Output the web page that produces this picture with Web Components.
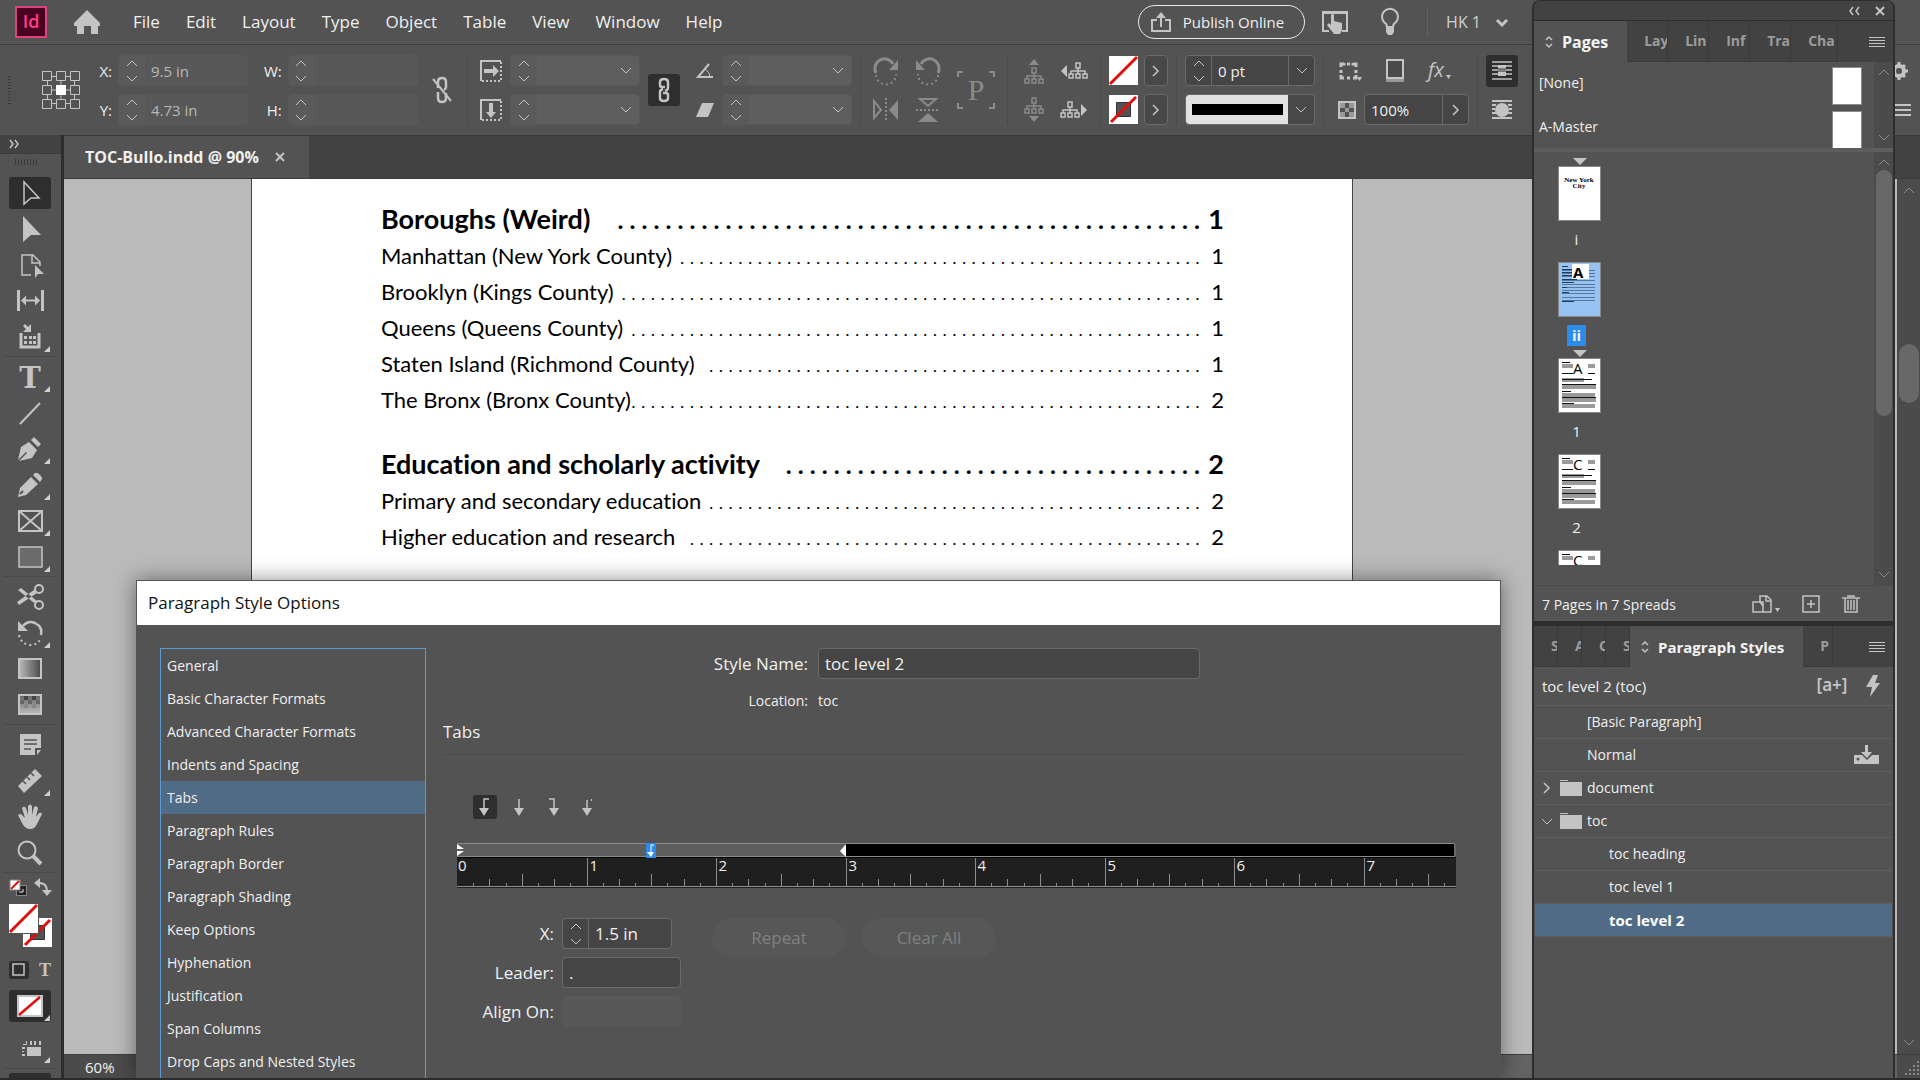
<!DOCTYPE html>
<html lang="en">
<head>
<meta charset="utf-8">
<title>TOC-Bullo.indd @ 90%</title>
<style>
  html, body { height: 100%; margin: 0; }
  body {
    display: flex;
    flex-direction: column;
    position: relative;
    overflow: hidden;
    background: #535353;
    color: #f0f0f0;
    font: 15px/20px "Open Sans", "Noto Sans", sans-serif;
    border-bottom: 2px solid #2b2b2b;
    box-sizing: border-box;
  }
  main { flex: 1; display: flex; min-height: 0; }
  id-document { flex: 1; min-width: 0; }
  /* floating windows */
  id-dialog { position: absolute; left: 136px; right: 419px; top: 580px; bottom: 0; }
  .dock { position: absolute; right: 25px; top: 0; bottom: 0; width: 363px; display: flex; flex-direction: column; }
  .dock id-styles { flex: 1; min-height: 0; }
</style>
</head>
<body>
  <id-menubar></id-menubar>
  <id-controlbar></id-controlbar>
  <main>
    <id-toolbar></id-toolbar>
    <id-document name="TOC-Bullo.indd @ 90%" zoom="60%">
      <toc-line level="1" dots="49" page="1">Boroughs (Weird)</toc-line>
      <toc-line dots="54" page="1">Manhattan (New York County)</toc-line>
      <toc-line dots="60" page="1">Brooklyn (Kings County)</toc-line>
      <toc-line dots="59" page="1">Queens (Queens County)</toc-line>
      <toc-line dots="51" page="1">Staten Island (Richmond County)</toc-line>
      <toc-line dots="59" page="2">The Bronx (Bronx County)</toc-line>
      <toc-line level="1" dots="35" page="2">Education and scholarly activity</toc-line>
      <toc-line dots="51" page="2">Primary and secondary education</toc-line>
      <toc-line dots="53" page="2">Higher education and research</toc-line>
    </id-document>
  </main>
  <id-dialog></id-dialog>
  <div class="dock">
    <id-pages></id-pages>
    <id-styles></id-styles>
  </div>

<script>
// name: [width, height, svg body]
const ICONS = {
  logo: [32, 32, '<rect x="1" y="1" width="30" height="30" fill="#49021f" stroke="#d9467f" stroke-width="2"/><text x="16" y="22" text-anchor="middle" font-size="18" font-weight="600" font-family="Open Sans" fill="#ff3f8d">Id</text>'],
  home: [28, 24, '<path d="M14 0L27 13v3h-2v8h-7v-8h-7v8H4v-8H1v-3z"/>'],
  share: [20, 20, '<path class="s" d="M6 8H1v11h18V8h-5" stroke-width="2"/><path d="M10 0l5 6h-4v9H9V6H5z"/>'],
  touch: [28, 24, '<path d="M1 1h26v21h-6v-2h4V4H3v16h5v2H1z"/><path d="M10 5q2-2 3 0v6l8 2v7l-2 4h-6l-7-9 2-2 2 2z"/>'],
  bulb: [22, 30, '<path class="s" d="M8 20q0-3-3-5a8 8 0 1 1 12 0q-3 2-3 5z" stroke-width="2"/><path d="M7 21h8v4l-2 3h-4l-2-3z"/>'],
  down: [12, 7, '<path class="s" d="M1 1l5 5 5-5"/>'],
  downb: [14, 9, '<path class="s" d="M2 2l5 5 5-5" stroke-width="3"/>'],
  up: [12, 7, '<path class="s" d="M1 6l5-5 5 5"/>'],
  right: [8, 12, '<path class="s" d="M1 1l5 5-5 5" stroke-width="1.5"/>'],
  ref: [38, 38, '<path class="s" d="M9.500 5.500h5M23.500 5.500h5M9.500 32.500h5M23.500 32.500h5M5.500 9.500v5M5.500 23.500v5M32.500 9.500v5M32.500 23.500v5M9.500 19h5M23.500 19h5M19 9.500v5M19 23.500v5M.5.500h9v9h-9zM14.500.500h9v9h-9zM28.500.500h9v9h-9zM.5 14.500h9v9h-9zM28.500 14.500h9v9h-9zM.5 28.500h9v9h-9zM14.500 28.500h9v9h-9zM28.500 28.500h9v9h-9z"/><path fill="#fff" d="M14 14h10v10H14z"/>'],
  unlink: [20, 26, '<path class="s" d="M6 11V5q0-4 4-4t4 4v5q0 2-2 3M6 15v6q0 4 4 4t4-4v-5" stroke-width="2.500"/><path class="s" d="M1 2l18 22" stroke-width="2"/>'],
  link: [14, 24, '<path class="s" d="M8 9H5q-2 0-2-2V4q0-3 4-3t4 3v6q0 2-3 3M6 15h3q2 0 2 2v3q0 3-4 3t-4-3v-6q0-2 3-3" stroke-width="2.500"/>'],
  scalex: [22, 22, '<path class="s" d="M1 21V1h20" stroke-width="2"/><path class="s" d="M21 2v19H1" stroke-width="2" stroke-dasharray="2 2"/><path d="M4 9h9V5l6 6-6 6v-4H4z"/>'],
  scaley: [22, 22, '<path class="s" d="M1 21V1h20" stroke-width="2"/><path class="s" d="M21 2v19H1" stroke-width="2" stroke-dasharray="2 2"/><path d="M9 4v9H6l5 6 5-6h-3V4z"/>'],
  angle: [18, 16, '<path class="s" d="M13 1L2 14h15" stroke-width="2"/><path class="s" d="M9 6q5 3 5 8"/>'],
  shear: [18, 16, '<path d="M6 1h12l-6 14H0z"/>'],
  rotcw: [26, 26, '<path class="s" d="M3 15A9.500 9.500 0 0 1 20 6" stroke-width="3"/><path d="M25 2v10h-9z"/><path class="s" d="M3 17a10 10 0 0 0 20-1" stroke-width="2" stroke-dasharray="2 3"/>'],
  rotccw: [26, 26, '<path class="s" d="M23 15A9.500 9.500 0 0 0 6 6" stroke-width="3"/><path d="M1 2v10h9z"/><path class="s" d="M23 17a10 10 0 0 1-20-1" stroke-width="2" stroke-dasharray="2 3"/>'],
  fliph: [26, 24, '<path class="s" d="M1 3v17l7-8z" stroke-width="2"/><path class="s" d="M13 0v24" stroke-width="2" stroke-dasharray="2 2"/><path d="M25 2v20l-9-10z"/>'],
  flipv: [24, 26, '<path class="s" d="M4 2h16l-8 7z" stroke-width="2"/><path class="s" d="M0 13h24" stroke-width="2" stroke-dasharray="2 2"/><path d="M2 25h20L12 16z"/>'],
  pbox: [38, 38, '<path class="s" d="M1 6V1h5M32 1h5v5M37 32v5h-5M6 37H1v-5" stroke-width="2"/><text x="19" y="29" text-anchor="middle" font-size="30" font-family="Liberation Serif">P</text>'],
  treeup: [20, 26, '<path d="M5 7h10l-5-6z"/><path class="s" d="M8 10h4v5H8zM10 15v6M3 21v-3h14v3M1 21h4v4H1zM8 21h4v4H8zM15 21h4v4h-4z" stroke-width="1.500"/>'],
  treedown: [20, 26, '<path d="M5 19h10l-5 6z"/><path class="s" d="M8 1h4v5H8zM10 6v6M3 12V9h14v3M1 12h4v4H1zM8 12h4v4H8zM15 12h4v4h-4z" stroke-width="1.500"/>'],
  treeprev: [28, 18, '<path d="M7 3v12L1 9z"/><path class="s" d="M16 1h4v5h-4zM18 6v6M11 12V9h14v3M9 12h4v4H9zM16 12h4v4h-4zM23 12h4v4h-4z" stroke-width="1.500"/>'],
  treenext: [28, 18, '<path d="M21 3v12l6-6z"/><path class="s" d="M8 1h4v5H8zM10 6v6M3 12V9h14v3M1 12h4v4H1zM8 12h4v4H8zM15 12h4v4h-4z" stroke-width="1.500"/>'],
  none: [29, 29, '<path fill="#fff" d="M0 0h29v29H0z"/><path d="M1 28L28 1" stroke="#e01010" stroke-width="3"/>'],
  nonestroke: [29, 29, '<path fill="#fff" d="M0 0h29v29H0z"/><path fill="#535353" stroke="#333" d="M7.500 7.500h14v14h-14z"/><path d="M2 27L27 2" stroke="#e01010" stroke-width="3"/>'],
  corner: [24, 20, '<path class="s" d="M3 6V3h3v-1M9 3h3M15 2v1h3v3M18 9v3M18 14v3h-3M12 17H9M6 17H3v-3M3 12V9" stroke-width="3"/><path d="M19 16h5l-2.500 4z"/>'],
  shadow: [22, 24, '<path fill="#999" d="M2 17h18v6H2z"/><path d="M3 1h16v18H3z" fill="#4a4a4a" stroke="#c4c4c4" stroke-width="2"/>'],
  fx: [26, 24, '<text x="0" y="18" font-size="20" font-style="italic" font-family="Open Sans">fx</text><path d="M18 16h5l-2.500 4z"/>'],
  checker: [18, 18, '<path class="s" d="M1 1h16v16H1z" stroke-width="2"/><path fill="#999" d="M2 2h5v5H2zM11 2h5v5h-5zM2 11h5v5H2zM11 11h5v5h-5zM7 7h4v4H7z"/>'],
  wrapnone: [22, 20, '<path class="s" d="M1 1h20M1 5h20M1 9h20M1 13h20M1 18h20" stroke-width="1.500"/><path d="M7 4h8v3H7zM7 11h8v4H7z"/><path fill="#777" d="M7 7h8v4H7z"/>'],
  wraparound: [22, 20, '<path class="s" d="M1 1h20M1 5h4M17 5h4M1 9h3M18 9h3M1 13h4M17 13h4M1 18h20" stroke-width="2"/><ellipse cx="11" cy="10" rx="7" ry="7"/>'],
  gear: [22, 22, '<circle class="s" cx="11" cy="11" r="5" stroke-width="4"/><path class="s" d="M11 2v18M2 11h18M5 5l3 3M14 14l3 3M17 5l-3 3M8 14l-3 3" stroke-width="3"/><circle cx="11" cy="11" r="3" fill="#535353"/>'],
  lines: [24, 12, '<path class="s" d="M0 1h24M0 6h24M0 11h24" stroke-width="2"/>'],
  menu: [16, 12, '<path class="s" d="M0 1.500h16M0 4.500h16M0 7.500h16M0 10.500h16"/>'],
  expand: [10, 8, '<path class="s" d="M1 0l3 4-3 4M6 0l3 4-3 4" stroke-width="1.500"/>'],
  collapse: [12, 8, '<path class="s" d="M5 0L2 4l3 4M11 0L8 4l3 4" stroke-width="1.500"/>'],
  close: [10, 10, '<path class="s" d="M1 1l8 8M9 1L1 9" stroke-width="2"/>'],
  updown: [8, 14, '<path class="s" d="M1 5l3-3 3 3M1 9l3 3 3-3" stroke-width="1.500"/>'],
  tri: [14, 7, '<path d="M0 0h14L7 7z"/>'],
  // tools, drawn round the middle of a 30px box
  select: [30, 30, '<path class="s" d="M9 4v22l7-6h8z" stroke-width="1.500"/>'],
  direct: [30, 30, '<path d="M8 2v26l8-7h10z"/>'],
  page: [30, 30, '<path class="s" d="M16 25H7V5h11l7 7v4M17 5v8h8" stroke-width="1.500"/><path d="M20 15v13l3-4h6z"/>'],
  gap: [30, 30, '<path d="M2 4h3v21H2zM26 4h3v21h-3zM6 14.500l5-5v4h9v-4l5 5-5 5v-4h-9v4z"/>'],
  collect: [30, 30, '<path class="s" d="M6 11v14h18V11" stroke-width="3"/><path d="M9 14h3v3H9zM14 14h3v3h-3zM18 14h3v3h-3zM9 19h3v3H9zM14 19h3v3h-3zM18 19h3v3h-3zM16 2v8H8l3-3-3-3 2-2 3 3z"/>'],
  type: [30, 30, '<text x="15" y="26" text-anchor="middle" font-size="29" font-weight="bold" font-family="DejaVu Serif">T</text>'],
  line: [30, 30, '<path class="s" d="M5 26L25 5" stroke-width="2"/>'],
  pen: [30, 30, '<path d="M3 26l3-13 8-5 8 8-5 8-13 3 8-8-1-1zM16 6l3-3 7 7-3 3z"/>'],
  pencil: [30, 30, '<path d="M3 27l2-9L16 7l7 7-12 11zM18 5l2-2q2-1 5 2t2 4l-2 3z"/><path d="M5 24l3-3" stroke="#535353" stroke-width="2"/>'],
  frame: [30, 30, '<path class="s" d="M4 5h23v20H4zM4 5l23 20M27 5L4 25" stroke-width="2"/>'],
  rect: [30, 30, '<path fill="#6b6b6b" stroke="#c4c4c4" stroke-width="1.500" d="M4 5h23v20H4z"/>'],
  scissors: [30, 30, '<path d="M3 8l3-2 16 13-3 2zM2 20l2 3 18-12-3-3z"/><circle class="s" cx="24" cy="7" r="4" stroke-width="2"/><circle class="s" cx="24" cy="23" r="4" stroke-width="2"/>'],
  rotate: [30, 30, '<path class="s" d="M8 8q5-6 12-3 8 4 6 12" stroke-width="2.500"/><path d="M3 3v10h10z"/><path class="s" d="M4 17q2 9 11 10 8 0 11-7" stroke-width="2" stroke-dasharray="2 3"/>'],
  gradient: [30, 30, '<linearGradient id="g"><stop stop-color="#bbb"/><stop offset="1" stop-color="#484848"/></linearGradient><path fill="url(#g)" stroke="#c4c4c4" stroke-width="2" d="M4 5h22v19H4z"/>'],
  feather: [30, 30, '<linearGradient id="f" x2="0" y2="1"><stop stop-color="#666"/><stop offset="1" stop-color="#bbb"/></linearGradient><path fill="url(#f)" stroke="#c4c4c4" stroke-width="2" d="M4 5h22v19H4z"/><path fill="#444" d="M9 6h4v4H9zM17 6h4v4h-4z"/><path fill="#666" d="M5 10h4v4H5zM13 10h4v4h-4zM21 10h4v4h-4z"/><path fill="#888" d="M9 14h4v4H9zM17 14h4v4h-4z"/>'],
  note: [30, 30, '<path d="M5 4h21v14h-6v7H5zM22 20h4l-4 5z"/><path d="M9 10h13M9 14h13M9 19h7" stroke="#535353" stroke-width="1.500"/>'],
  ruler: [30, 30, '<path d="M3 20L20 3l7 7L9 27z"/><path d="M8 15l3 3M12 11l3 3M16 7l3 3" stroke="#535353" stroke-width="1.500"/>'],
  hand: [30, 30, '<path d="M3 13q2-2 4 0l3 3-3-10q2-3 4 0l2 7V4q2-3 4 0v9l2-8q3-2 4 1l-2 9 3-4q3-1 3 1l-5 10q-2 5-7 5t-8-6z"/>'],
  zoom: [30, 30, '<circle class="s" cx="12" cy="12" r="8.500" stroke-width="2"/><path class="s" d="M18 18l8 8" stroke-width="4"/>'],
  defaults: [18, 17, '<path fill="#222" stroke="#888" d="M7.500 6.500h10v10h-10z"/><path fill="#fff" stroke="#888" d="M1 1h10v10H1z"/><path d="M2 10L10 2" stroke="#e01010" stroke-width="2"/><path d="M14 10v3h-4" stroke="#eee" fill="none"/>'],
  swap: [18, 18, '<path class="s" d="M4 5q9-1 9 9" stroke-width="2"/><path d="M0 5l6-5v10zM8 12h10l-5 6z"/>'],
  box: [14, 14, '<path class="s" d="M1 1h11v11H1z" stroke-width="1.500"/>'],
  typesm: [14, 14, '<text x="7" y="13" text-anchor="middle" font-size="18" font-weight="bold" font-family="Liberation Serif">T</text>'],
  apply: [26, 22, '<path fill="#fff" stroke="#c4c4c4" stroke-width="2" d="M1 1h24v20H1z"/><path d="M2 20L23 2" stroke="#e01010" stroke-width="2.500"/>'],
  preview: [30, 30, '<path d="M12 14h14v9H12zM7 14h3v2H7zM7 21h3v2H7zM7 18h2v1H7zM11 8h1v4h-4v-1h3zM15 8h2v4h-2zM19 8h2v4h-2zM24 8h2v4h-2z"/>'],
  tableft: [12, 18, '<path class="s" d="M10 1H5v11" stroke-width="1.500"/><path d="M0 10h10l-5 8z"/>'],
  tabcenter: [12, 18, '<path class="s" d="M6 1v11" stroke-width="1.500"/><path d="M1 10h10l-5 8z"/>'],
  tabright: [12, 18, '<path class="s" d="M2 1h5v11" stroke-width="1.500"/><path d="M2 10h10l-5 8z"/>'],
  tabdecimal: [12, 18, '<path class="s" d="M6 2v11" stroke-width="1.500"/><path d="M1 10h10l-5 8zM10 1h1v2h-1z"/>'],
  pagesize: [28, 18, '<path class="s" d="M1 7h10v10H1zM8 7V1h7l4 4v12h-8M14 1v5h5M8 7l3 4" stroke-width="1.500"/><path d="M23 13h5l-2.500 4z"/>'],
  add: [18, 18, '<path class="s" d="M1 1h16v16H1zM5 9h8M9 5v8" stroke-width="1.500"/>'],
  trash: [18, 18, '<path class="s" d="M0 3h18M6 2V1h6v1M3 4v13h12V4M6 5v10M9 5v10M12 5v10" stroke-width="1.500"/>'],
  override: [28, 22, '<text x="14" y="16" text-anchor="middle" font-size="17" font-weight="600" font-family="Noto Sans">[a+]</text>'],
  bolt: [14, 22, '<path d="M7 0h5L9 8h5L4 22l2-10H0z"/>'],
  folder: [22, 18, '<path d="M0 1h8v1H0zM0 3h22v14H0z"/>'],
  download: [26, 20, '<path d="M0 10h8l5 5 5-5h7v9H0z"/><path d="M11 0h3v7h4l-5 6-6-6h4z"/><circle cx="4" cy="14" r="1.500" fill="#535353"/>'],
  grip: [14, 14, '<path d="M12 0h2v2h-2zM8 4h2v2H8zM12 4h2v2h-2zM4 8h2v2H4zM8 8h2v2H8zM12 8h2v2h-2zM0 12h2v2H0zM4 12h2v2H4zM8 12h2v2H8zM12 12h2v2h-2z"/>']
};

class IdIcon extends HTMLElement {
  connectedCallback() {
    const [w, h, body] = ICONS[this.getAttribute('name')];
    this.attachShadow({ mode: 'open' }).innerHTML = `
      <style>
        :host { display: inline-flex; flex: none; color: #c4c4c4; }
        :host([dim]) { color: #8b8b8b; }
        svg { display: block; fill: currentColor; overflow: visible; }
        .s { fill: none; stroke: currentColor; }
      </style>
      <svg width="${w}" height="${h}" viewBox="0 0 ${w} ${h}" aria-hidden="true">${body}</svg>`;
  }
}

// labelled text field, with optional stepper and drop arrow
class IdField extends HTMLElement {
  connectedCallback() {
    const has = n => this.hasAttribute(n);
    const off = has('off') ? 'disabled' : '';
    const label = this.getAttribute('label');
    this.attachShadow({ mode: 'open' }).innerHTML = `
      <style>
        :host { display: flex; align-items: center; gap: var(--gap, 6px); }
        label { flex: 1; text-align: right; white-space: nowrap; }
        .box { display: flex; box-sizing: border-box; width: var(--w, 130px); height: 31px; border: 1px solid #6a6a6a; border-radius: 4px; background: #454545; overflow: hidden; }
        button { display: flex; flex-direction: column; align-items: center; justify-content: center; gap: 8px; width: 26px; flex: none; border: 0; padding: 0; background: none; }
        .step { border-right: 1px solid #6a6a6a; }
        .drop { border-left: 1px solid #6a6a6a; }
        input { flex: 1; min-width: 0; border: 0; outline: 0; padding: 0 6px; background: none; color: #f0f0f0; font: inherit; }
        :host([off]) .box { border-color: #585858; background: #585858; }
        :host([off]) .step { border-color: #5b5b5b; background: #5a5a5a; }
        :host([off]) .drop { border: 0; }
        :host([off]) input { color: #b8b8b8; }
        :host([mid]) .box { background: #5e5e5e; }
      </style>
      ${has('nolabel') ? '' : `<label for="f">${label}</label>`}
      <div class="box">
        ${has('step') ? `<button class="step" aria-label="Step" ${off}><id-icon name="up"></id-icon><id-icon name="down"></id-icon></button>` : ''}
        <input id="f" value="${this.getAttribute('value') || ''}" aria-label="${label}" ${off}>
        ${has('drop') ? `<button class="drop" aria-label="Open list" ${off}><id-icon name="${this.getAttribute('drop') || 'down'}"></id-icon></button>` : ''}
      </div>`;
  }
}

class IdMenubar extends HTMLElement {
  connectedCallback() {
    const items = ['File', 'Edit', 'Layout', 'Type', 'Object', 'Table', 'View', 'Window', 'Help'];
    this.attachShadow({ mode: 'open' }).innerHTML = `
      <style>
        :host { display: flex; align-items: center; height: 44px; flex: none; padding: 0 411px 0 15px; border-bottom: 1px solid #3e3e3e; }
        button { border: 0; padding: 0; background: none; color: inherit; font: 17px/22px "Open Sans", sans-serif; display: flex; align-items: center; }
        .home { margin: 0 32px 0 26px; }
        nav { display: flex; gap: 26px; flex: 1; }
        .publish { gap: 12px; height: 34px; padding: 0 20px 0 12px; border: 1px solid #e8e8e8; border-radius: 17px; margin-right: 16px; font-size: 15px; }
        .bulb { margin: 0 26px 0 30px; }
        .user { gap: 14px; border-left: 1px solid #626262; height: 30px; padding-left: 18px; color: #d0d0d0; font-size: 16px; }
      </style>
      <id-icon name="logo"></id-icon>
      <button class="home" aria-label="Home"><id-icon name="home"></id-icon></button>
      <nav>${items.map(i => `<button>${i}</button>`).join('')}</nav>
      <button class="publish"><id-icon name="share"></id-icon>Publish Online</button>
      <button aria-label="Touch"><id-icon name="touch"></id-icon></button>
      <button class="bulb" aria-label="Learn"><id-icon name="bulb"></id-icon></button>
      <button class="user">HK 1 <id-icon name="downb"></id-icon></button>`;
  }
}

class IdControlbar extends HTMLElement {
  connectedCallback() {
    const icon = (n, dim) => `<button aria-label="${n}"><id-icon name="${n}" ${dim ? 'dim' : ''}></id-icon></button>`;
    this.attachShadow({ mode: 'open' }).innerHTML = `
      <style>
        :host { display: flex; align-items: center; height: 90px; flex: none; overflow: hidden; }
        section { display: flex; align-items: center; gap: 8px; height: 70px; box-sizing: border-box; padding: 0 8px; border-left: 1px solid #4a4a4a; flex: none; }
        section:first-of-type { border: 0; gap: 16px; padding: 0 15px 0 0; }
        .col { display: grid; grid-auto-rows: 31px; gap: 8px; align-items: center; justify-items: center; }
        .two { grid-template-columns: auto auto; column-gap: 16px; }
        .fields { width: 152px; justify-items: stretch; }
        .handle { width: 3px; height: 28px; margin: 0 15px 0 8px; background: repeating-linear-gradient(#3a3a3a 0 1px, transparent 1px 3px); }
        button { display: flex; align-items: center; justify-content: center; border: 0; padding: 0; background: none; }
        .on { width: 32px; height: 32px; border-radius: 3px; background: #2e2e2e; }
        .arrow { width: 24px; height: 31px; box-sizing: border-box; border: 1px solid #6a6a6a; border-radius: 4px; background: #484848; }
        .swatches { column-gap: 6px; }
        .looks { justify-items: start; }
        .effects { display: flex; gap: 22px; align-items: center; }
        .opacity { display: flex; gap: 8px; align-items: center; --w: 105px; }
        .line { display: flex; width: 130px; height: 31px; box-sizing: border-box; border: 1px solid #6a6a6a; border-radius: 4px; overflow: hidden; background: #484848; }
        select { appearance: none; flex: 1; min-width: 0; border: 6px solid #e2e2e2; border-width: 9px 5px 9px 6px; background: #000; border-radius: 0; }
        .line button { width: 26px; }
        .end { margin-left: auto; padding-right: 9px; }
      </style>
      <section>
        <div class="handle"></div>
        <id-icon name="ref"></id-icon>
        <div class="col fields"><id-field off step label="X:" value="9.5 in"></id-field><id-field off step label="Y:" value="4.73 in"></id-field></div>
        <div class="col fields"><id-field off step label="W:"></id-field><id-field off step label="H:"></id-field></div>
        ${icon('unlink')}
      </section>
      <section style="padding-left: 12px">
        <div class="col"><id-icon name="scalex"></id-icon><id-icon name="scaley"></id-icon></div>
        <div class="col"><id-field nolabel off mid step drop label="Scale X"></id-field><id-field nolabel off mid step drop label="Scale Y"></id-field></div>
        <button class="on" aria-label="Constrain proportions"><id-icon name="link"></id-icon></button>
        <div class="col" style="padding-left: 8px"><id-icon name="angle"></id-icon><id-icon name="shear"></id-icon></div>
        <div class="col"><id-field nolabel off mid step drop label="Rotation"></id-field><id-field nolabel off mid step drop label="Shear"></id-field></div>
      </section>
      <section style="padding: 0 12px; gap: 16px">
        <div class="col two">${icon('rotcw', 1)}${icon('rotccw', 1)}${icon('fliph', 1)}${icon('flipv', 1)}</div>
        <id-icon name="pbox" dim></id-icon>
      </section>
      <section style="padding: 0 12px 0 16px">
        <div class="col two">${icon('treeup', 1)}${icon('treeprev')}${icon('treedown', 1)}${icon('treenext')}</div>
      </section>
      <section>
        <div class="col two swatches">
          ${icon('none')}<button class="arrow" aria-label="Fill"><id-icon name="right"></id-icon></button>
          ${icon('nonestroke')}<button class="arrow" aria-label="Stroke"><id-icon name="right"></id-icon></button>
        </div>
      </section>
      <section>
        <div class="col">
          <id-field nolabel step drop label="Stroke weight" value="0 pt"></id-field>
          <div class="line"><select aria-label="Stroke type"><option></option></select><button aria-label="Stroke types"><id-icon name="down"></id-icon></button></div>
        </div>
      </section>
      <section style="padding: 0 8px 0 14px">
        <div class="col looks">
          <div class="effects">${icon('corner')}${icon('shadow')}${icon('fx')}</div>
          <div class="opacity">${icon('checker')}<id-field nolabel drop="right" label="Opacity" value="100%"></id-field></div>
        </div>
      </section>
      <section>
        <div class="col"><button class="on" aria-label="No text wrap"><id-icon name="wrapnone"></id-icon></button>${icon('wraparound')}</div>
      </section>
      <div class="col end">${icon('gear')}${icon('lines')}</div>`;
  }
}

class IdToolbar extends HTMLElement {
  connectedCallback() {
    const groups = [
      ['select', 'direct', 'page', 'gap', 'collect+'],
      ['type+', 'line', 'pen+', 'pencil+', 'frame+', 'rect+'],
      ['scissors', 'rotate+', 'gradient', 'feather'],
      ['note', 'ruler+', 'hand', 'zoom']
    ];
    const tool = t => {
      const name = t.replace('+', '');
      return `<button class="tool ${t !== name ? 'more' : ''} ${name === 'select' ? 'on' : ''}" aria-label="${name}"><id-icon name="${name}"></id-icon></button>`;
    };
    this.attachShadow({ mode: 'open' }).innerHTML = `
      <style>
        :host { display: block; width: 64px; flex: none; box-sizing: border-box; border-right: 3px solid #2d2d2d; overflow: hidden; }
        header { height: 18px; background: #424242; border-bottom: 1px solid #3a3a3a; display: flex; align-items: center; padding-left: 9px; }
        .handle { width: 22px; height: 6px; margin: 5px 0 12px 15px; background: repeating-linear-gradient(90deg, #3a3a3a 0 1px, transparent 1px 3px); }
        .group { display: flex; flex-direction: column; gap: 4px; padding-bottom: 3px; margin: 0 5px 4px 3px; border-bottom: 1px solid #4a4a4a; align-items: center; }
        button { position: relative; border: 0; padding: 0; background: none; display: flex; align-items: center; justify-content: center; }
        .tool { width: 42px; height: 32px; border-radius: 3px; }
        .on { background: #2e2e2e; border-radius: 3px; }
        .more::after { content: ""; position: absolute; right: 1px; bottom: 1px; border: 3px solid transparent; border-right-color: #d0d0d0; border-bottom-color: #d0d0d0; }
        .pair { display: flex; justify-content: space-between; align-items: center; padding: 0 9px 0 9px; height: 20px; }
        .swatches { position: relative; width: 44px; height: 44px; margin: 7px 0 12px 9px; }
        .swatches id-icon { position: absolute; left: 0; top: 0; outline: 1px solid #535353; }
        .swatches id-icon:first-child { left: 14px; top: 14px; }
        .small { width: 20px; height: 18px; }
        .last { margin: 10px 5px 4px 3px; border-bottom: 1px solid #4a4a4a; display: flex; flex-direction: column; align-items: center; gap: 10px; padding-bottom: 4px; }
        .cut { width: 42px; height: 32px; margin-left: 9px; }
      </style>
      <header><id-icon name="expand"></id-icon></header>
      <div class="handle"></div>
      ${groups.map(g => `<div class="group">${g.map(tool).join('')}</div>`).join('')}
      <div class="pair"><button aria-label="Default fill and stroke"><id-icon name="defaults"></id-icon></button><button aria-label="Swap"><id-icon name="swap"></id-icon></button></div>
      <div class="swatches"><id-icon name="nonestroke"></id-icon><id-icon name="none"></id-icon></div>
      <div class="pair"><button class="on small" aria-label="Container"><id-icon name="box"></id-icon></button><button aria-label="Text"><id-icon name="typesm"></id-icon></button></div>
      <div class="last">
        <button class="tool on more" aria-label="Apply none"><id-icon name="apply"></id-icon></button>
        <button class="tool more" aria-label="View options"><id-icon name="preview"></id-icon></button>
      </div>
      <button class="on cut" aria-label="Screen mode"></button>`;
  }
}

class TocLine extends HTMLElement {
  connectedCallback() {
    const dots = Array(+this.getAttribute('dots')).fill('.').join(' ');
    this.attachShadow({ mode: 'open' }).innerHTML = `
      <style>
        :host { display: flex; align-items: baseline; height: 36px; font: 22px/36px Lato, "Open Sans", sans-serif; font-variant-ligatures: none; color: #000; white-space: nowrap; }
        :host([level="1"]) { height: 38px; line-height: 38px; font-size: 27px; font-weight: bold; }
        :host([level="1"]:not(:first-child)) { margin-top: 27px; }
        .dots { flex: 1; min-width: 0; text-align: right; font-family: Roboto, sans-serif; font-size: 19px; }
        :host([level="1"]) .dots { font-family: Lato, sans-serif; font-size: 25px; }
        .num { width: 24px; text-align: right; flex: none; }
      </style>
      <slot></slot><span class="dots">${dots}</span><span class="num">${this.getAttribute('page')}</span>`;
  }
}

class IdDocument extends HTMLElement {
  connectedCallback() {
    this.attachShadow({ mode: 'open' }).innerHTML = `
      <style>
        :host { display: flex; flex-direction: column; border-top: 1px solid #3a3a3a; }
        .tabs { height: 42px; background: #424242; border-bottom: 1px solid #3a3a3a; display: flex; flex: none; }
        .tab { display: flex; align-items: center; gap: 16px; padding: 0 24px 0 21px; background: #535353; font-weight: bold; font-size: 16px; }
        button { border: 0; padding: 0; background: none; display: flex; }
        .view { flex: 1; display: flex; min-height: 0; }
        .board { flex: 1; display: flex; background: #bababa; padding: 0 544px 0 187px; overflow: hidden; }
        .paper { flex: 1; min-width: 0; background: #fff; border: solid #444; border-width: 0 1px; padding: 21px 128px 0 129px; }
        .scroll { width: 23px; box-sizing: border-box; background: #4b4b4b; display: flex; flex-direction: column; align-items: center; padding: 8px 0; }
        .thumb { width: 20px; height: 59px; border-radius: 10px; background: #686868; margin: 150px 0 auto; }
        footer { display: flex; height: 23px; flex: none; align-items: center; border-top: 1px solid #3e3e3e; background: #636363; }
        .zoom { align-self: stretch; display: flex; align-items: center; width: 100px; padding-left: 21px; background: #4b4b4b; font-size: 15px; }
        .size { margin-left: auto; width: 23px; align-self: stretch; padding: 4px 0 0 8px; box-sizing: border-box; background: #4b4b4b; }
      </style>
      <div class="tabs"><div class="tab">${this.getAttribute('name')}<button aria-label="Close"><id-icon name="close"></id-icon></button></div></div>
      <div class="view">
        <div class="board"><div class="paper"><slot></slot></div></div>
        <div class="scroll"><id-icon name="up" dim></id-icon><div class="thumb"></div><id-icon name="down" dim></id-icon></div>
      </div>
      <footer><span class="zoom">${this.getAttribute('zoom')}</span><span class="size"><id-icon name="grip" dim></id-icon></span></footer>`;
  }
}

class IdRuler extends HTMLElement {
  connectedCallback() {
    const inch = 129.5, length = 999;
    let ticks = '', labels = '';
    for (let i = 0; i * inch / 8 < length; i++) {
      const x = Math.round(i * inch / 8) + 0.5;
      const h = i % 8 === 0 ? 29 : i % 4 === 0 ? 13 : i % 2 === 0 ? 8 : 4;
      if (i) ticks += `M${x} 44v${-h}`;
      if (i % 8 === 0) labels += `<text x="${i ? x + 2 : 1}" y="28">${i / 8}</text>`;
    }
    this.attachShadow({ mode: 'open' }).innerHTML = `
      <style>
        :host { display: block; height: 45px; background: #1f1f1f; }
        svg { display: block; width: 100%; height: 45px; }
        text { font: 15px "Open Sans", sans-serif; fill: #f0f0f0; }
      </style>
      <svg>
        <path fill="#000" d="M0 0h999v15H0z"/>
        <path fill="#5e5e5e" d="M0 0h388v14H0z"/>
        <path d="M0 .5h998v13H0M998 .5v13" fill="none" stroke="#8c8c8c"/>
        <path d="${ticks}M0 43.500h999" stroke="#8c8c8c" fill="none"/>
        <path fill="#fff" d="M0 1l7 5H0zM0 8h7l-7 5zM389 1v13l-6-6z"/>
        <path fill="#2d8ceb" d="M189 0h10v15h-10z"/>
        <path d="M197 2h-3v7" stroke="#fff" fill="none"/><path fill="#fff" d="M190 9h7l-3 5z"/>
        ${labels}
      </svg>`;
  }
}

class IdDialog extends HTMLElement {
  connectedCallback() {
    const list = ['General', 'Basic Character Formats', 'Advanced Character Formats', 'Indents and Spacing', 'Tabs', 'Paragraph Rules',
      'Paragraph Border', 'Paragraph Shading', 'Keep Options', 'Hyphenation', 'Justification', 'Span Columns', 'Drop Caps and Nested Styles'];
    this.attachShadow({ mode: 'open' }).innerHTML = `
      <style>
        :host { display: flex; flex-direction: column; background: #535353; border: 1px solid #555; border-bottom: 0; box-sizing: border-box; box-shadow: 0 0 20px rgba(0, 0, 0, .45); overflow: hidden; font-size: 17px; }
        header { background: #fff; color: #111; height: 44px; flex: none; display: flex; align-items: center; padding: 0 11px; }
        .body { flex: 1; min-height: 0; display: flex; gap: 17px; padding: 23px 32px 0 23px; }
        ul { list-style: none; margin: 0; padding: 0; width: 266px; flex: none; box-sizing: border-box; border: 1px solid #5b9bd5; border-bottom: 0; overflow: hidden; font-size: 14px; }
        li { height: 33px; line-height: 33px; padding-left: 6px; }
        li.on { background: #4f6b85; }
        .content { flex: 1; min-width: 0; }
        .name { --w: 382px; --gap: 10px; width: 757px; }
        .where { display: flex; gap: 10px; margin: 12px 0 10px; font-size: 14px; }
        .where span:first-child { width: 365px; text-align: right; }
        h2 { font: inherit; line-height: 22px; margin: 0; padding-bottom: 11px; border-bottom: 1px solid #4c4c4c; }
        .kinds { display: flex; gap: 10px; margin: 40px 0 24px 30px; }
        button { border: 0; padding: 0; background: none; font: inherit; color: #808080; }
        .kinds button { width: 24px; height: 24px; border-radius: 3px; display: flex; align-items: center; justify-content: center; }
        .kinds .on { background: #2e2e2e; }
        id-ruler { margin: 0 12px 0 14px; }
        .row { display: flex; margin: 30px 0 0 14px; align-items: flex-start; gap: 31px; }
        .fields { display: grid; gap: 8px; --gap: 8px; width: 224px; }
        id-field { --w: 119px; }
        .short { --w: 110px; margin-right: 9px; }
        .pills { display: flex; gap: 16px; }
        .pills button { width: 134px; height: 39px; border-radius: 20px; background: #575757; }
      </style>
      <header>Paragraph Style Options</header>
      <div class="body">
        <ul>${list.map(t => `<li class="${t === 'Tabs' ? 'on' : ''}">${t}</li>`).join('')}</ul>
        <div class="content">
          <id-field class="name" label="Style Name:" value="toc level 2"></id-field>
          <div class="where"><span>Location:</span><span>toc</span></div>
          <h2>Tabs</h2>
          <div class="kinds">
            <button class="on" aria-label="Left"><id-icon name="tableft"></id-icon></button>
            <button aria-label="Center"><id-icon name="tabcenter"></id-icon></button>
            <button aria-label="Right"><id-icon name="tabright"></id-icon></button>
            <button aria-label="Decimal"><id-icon name="tabdecimal"></id-icon></button>
          </div>
          <id-ruler></id-ruler>
          <div class="row">
            <div class="fields">
              <id-field class="short" step label="X:" value="1.5 in"></id-field>
              <id-field label="Leader:" value="."></id-field>
              <id-field off label="Align On:"></id-field>
            </div>
            <div class="pills"><button disabled>Repeat</button><button disabled>Clear All</button></div>
          </div>
        </div>
      </div>`;
  }
}

// tab strip of a docked panel; tabs before and after the open one are clipped
class PanelTabs extends HTMLElement {
  connectedCallback() {
    const side = n => (this.getAttribute(n) || '').split(',').filter(Boolean).map(t => `<button class="tab">${t}</button>`).join('');
    this.attachShadow({ mode: 'open' }).innerHTML = `
      <style>
        :host { display: flex; height: 41px; background: #424242; flex: none; font-weight: bold; }
        button { border: 0; background: none; font: inherit; color: #9c9c9c; box-sizing: border-box; }
        .tab { width: var(--tab, 41px); padding: 0 0 0 17px; border-right: 1px solid #3a3a3a; border-bottom: 1px solid #3a3a3a; overflow: hidden; text-align: left; white-space: nowrap; font-size: 14px; }
        .tab:nth-last-child(2) { width: calc(var(--tab, 41px) + 6px); }
        .open { display: flex; align-items: center; gap: 9px; padding: 0 19px 0 11px; background: #535353; color: #f4f4f4; white-space: nowrap; }
        .menu { margin-left: auto; padding: 0 8px; }
      </style>
      ${side('before')}<button class="open"><id-icon name="updown"></id-icon>${this.getAttribute('open')}</button>${side('after')}
      <button class="menu" aria-label="Panel menu"><id-icon name="menu"></id-icon></button>`;
  }
}

class PageThumb extends HTMLElement {
  connectedCallback() {
    const kind = this.getAttribute('kind');
    const label = this.getAttribute('label');
    let art = '';
    if (kind === 'title') {
      art = '<text x="21" y="16" text-anchor="middle" font-size="7" font-weight="bold" font-family="Liberation Serif">New York</text><text x="21" y="22" text-anchor="middle" font-size="7" font-weight="bold" font-family="Liberation Serif">City</text>';
    } else if (kind === 'toc') {
      art = '<path fill="#96c3f3" d="M0 0h43v55H0z"/><path fill="none" stroke="#54779b" d="M4 8.500h33M4 11.500h33M4 14.500h33M4 18.500h33M4 22.500h33M4 25.500h33M4 28.500h33M4 31.500h33M4 35.500h33M4 38.500h33"/><path fill="none" stroke="#1d3c60" stroke-width="1" d="M4 4.500h6M4 7.500h12M4 10.500h11M4 13.500h12M4 17.500h15M4 20.500h12M4 25.500h5M4 30.500h7M4 39.500h12"/><path fill="#fff" d="M14 2h17v15H14z"/><text x="15" y="16" font-size="15" font-weight="bold">A</text>';
    } else {
      art = '<path fill="none" stroke="#9a9a9a" stroke-width="4" d="M4 8h11M30 8h7M4 22h22M4 29h34M4 37h33M4 42h34M4 48h33"/><path fill="none" stroke="#111" stroke-width="1" d="M4 4.500h8M4 15.500h11M30 15.500h7M4 21.500h30M4 26.500h34M4 33.500h9M4 39.500h34M4 45.500h12"/>' +
        `<path fill="#fff" d="M15 2h14v14H15z"/><text x="15" y="16" font-size="15">${kind}</text>`;
    }
    this.attachShadow({ mode: 'open' }).innerHTML = `
      <style>
        :host { display: flex; flex-direction: column; align-items: center; width: 43px; height: 96px; flex: none; }
        id-icon { height: 8px; }
        .gap { height: 8px; }
        svg { display: block; flex: none; background: #fff; outline: 1px solid #888; outline-offset: -1px; font-family: "Open Sans"; }
        span { margin: 8px 6px 0 0; padding: 0 5px; height: 21px; line-height: 20px; font-size: 15px; }
        :host([on]) span { background: #2d8ceb; font-weight: bold; }
      </style>
      ${this.hasAttribute('start') ? '<id-icon name="tri"></id-icon>' : '<div class="gap"></div>'}
      <svg width="43" height="55">${art}</svg>${label ? `<span>${label}</span>` : ''}`;
  }
}

class IdPages extends HTMLElement {
  connectedCallback() {
    this.attachShadow({ mode: 'open' }).innerHTML = `
      <style>
        :host { display: block; flex: none; background: #535353; border: 2px solid #2d2d2d; border-top-width: 1px; border-bottom-width: 4px; border-radius: 8px 8px 0 0; overflow: hidden; }
        header { height: 19px; background: #424242; border-bottom: 1px solid #2d2d2d; display: flex; align-items: center; justify-content: flex-end; gap: 15px; padding-right: 8px; }
        panel-tabs { font-size: 16px; }
        .masters, .pages { display: flex; overflow: hidden; }
        .masters { height: 86px; border-bottom: 4px solid #5d5d5d; }
        .list { flex: 1; padding: 2px 12px 0 5px; font-size: 14px; }
        .list div { display: flex; justify-content: space-between; align-items: center; height: 44px; }
        .list span { padding-bottom: 6px; }
        i { width: 28px; height: 36px; background: #fff; border: 1px solid #8a8a8a; }
        .scroll { width: 19px; background: #4b4b4b; display: flex; flex-direction: column; align-items: center; justify-content: space-between; padding: 7px 0; box-sizing: border-box; }
        .pages { height: 433px; border-bottom: 1px solid #4a4a4a; }
        .thumbs { flex: 1; display: flex; flex-direction: column; height: 413px; overflow: hidden; padding: 6px 0 0 24px; box-sizing: border-box; }
        .thumb { width: 16px; height: 246px; border-radius: 8px; background: #686868; margin: 4px 0 auto; }
        footer { display: flex; align-items: center; gap: 22px; height: 35px; padding: 0 33px 0 8px; font-size: 14px; }
        footer span { flex: 1; padding-top: 3px; }
        button { border: 0; padding: 0; background: none; display: flex; }
      </style>
      <header><id-icon name="collapse"></id-icon><button aria-label="Close"><id-icon name="close"></id-icon></button></header>
      <panel-tabs open="Pages" after="Lay,Lin,Inf,Tra,Cha"></panel-tabs>
      <div class="masters">
        <div class="list"><div><span>[None]</span><i></i></div><div><span>A-Master</span><i></i></div></div>
        <div class="scroll"><id-icon name="up" dim></id-icon><id-icon name="down" dim></id-icon></div>
      </div>
      <div class="pages">
        <div class="thumbs">
          <page-thumb start kind="title" label="i"></page-thumb>
          <page-thumb on kind="toc" label="ii"></page-thumb>
          <page-thumb start kind="A" label="1"></page-thumb>
          <page-thumb kind="C" label="2"></page-thumb>
          <page-thumb kind="C"></page-thumb>
        </div>
        <div class="scroll"><id-icon name="up" dim></id-icon><div class="thumb"></div><id-icon name="down" dim></id-icon></div>
      </div>
      <footer>
        <span>7 Pages in 7 Spreads</span>
        <button aria-label="Edit page size"><id-icon name="pagesize"></id-icon></button>
        <button aria-label="New page"><id-icon name="add"></id-icon></button>
        <button aria-label="Delete page"><id-icon name="trash"></id-icon></button>
      </footer>`;
  }
}

class IdStyles extends HTMLElement {
  connectedCallback() {
    this.attachShadow({ mode: 'open' }).innerHTML = `
      <style>
        :host { display: block; background: #535353; border: solid #2d2d2d; border-width: 1px 2px 0; overflow: hidden; font-size: 14px; }
        panel-tabs { --tab: 24px; font-size: 15px; }
        .current { display: flex; align-items: center; gap: 20px; height: 38px; padding: 0 13px 0 8px; border-bottom: 1px solid #5e5e5e; font-size: 15px; }
        .current span { flex: 1; }
        button { border: 0; padding: 0; background: none; display: flex; }
        ul { list-style: none; margin: 0 1px; padding: 0; }
        li { display: grid; grid-template-columns: 16px 22px 1fr auto; column-gap: 5px; align-items: center; height: 32px; padding: 0 12px 0 4px; border-bottom: 1px solid #5e5e5e; }
        li span { grid-column: 3; }
        li id-icon:first-child { justify-self: center; }
        .sub span { padding-left: 22px; }
        .on { background: #4f6b85; color: #fff; font-weight: bold; font-size: 15px; }
      </style>
      <panel-tabs before="S,A,C,S" open="Paragraph Styles" after="P"></panel-tabs>
      <div class="current"><span>toc level 2 (toc)</span>
        <button aria-label="Style override highlighter"><id-icon name="override"></id-icon></button>
        <button aria-label="Quick apply"><id-icon name="bolt"></id-icon></button>
      </div>
      <ul>
        <li><span>[Basic Paragraph]</span></li>
        <li><span>Normal</span><id-icon name="download"></id-icon></li>
        <li><id-icon name="right"></id-icon><id-icon name="folder"></id-icon><span>document</span></li>
        <li><id-icon name="down"></id-icon><id-icon name="folder"></id-icon><span>toc</span></li>
        <li class="sub"><span>toc heading</span></li>
        <li class="sub"><span>toc level 1</span></li>
        <li class="sub on"><span>toc level 2</span></li>
      </ul>`;
  }
}

customElements.define('id-icon', IdIcon);
customElements.define('id-field', IdField);
customElements.define('id-menubar', IdMenubar);
customElements.define('id-controlbar', IdControlbar);
customElements.define('id-toolbar', IdToolbar);
customElements.define('toc-line', TocLine);
customElements.define('id-document', IdDocument);
customElements.define('id-ruler', IdRuler);
customElements.define('id-dialog', IdDialog);
customElements.define('panel-tabs', PanelTabs);
customElements.define('page-thumb', PageThumb);
customElements.define('id-pages', IdPages);
customElements.define('id-styles', IdStyles);
</script>
</body>
</html>
